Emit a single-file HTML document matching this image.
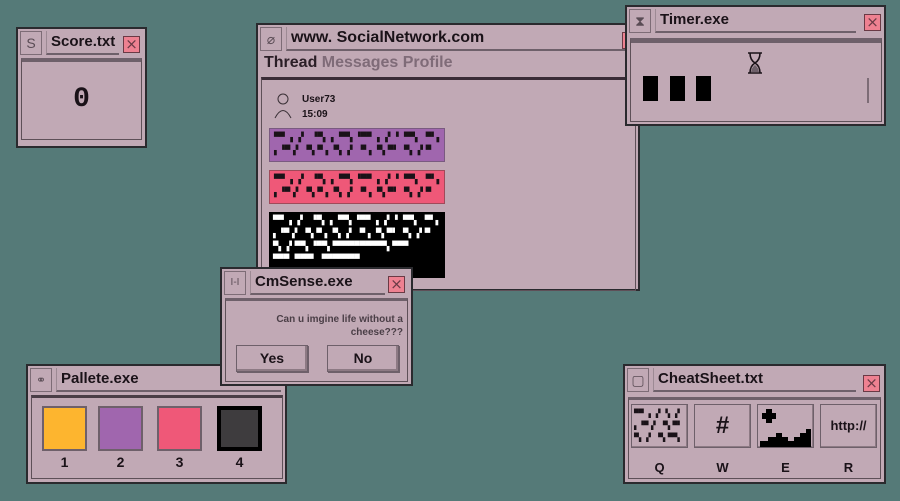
<!DOCTYPE html>
<html><head><meta charset="utf-8"><style>
*{box-sizing:border-box;margin:0;padding:0}
body{width:900px;height:501px;background:#557a78;position:relative;overflow:hidden;font-family:"Liberation Sans","DejaVu Sans",sans-serif;color:#1a1218}
.w{position:absolute;background:#c1a9b5;border:2px solid #2a2a2e}
.tb{position:absolute;left:2px;right:2px;top:2px;height:24px}
.ic{position:absolute;left:0;top:0;width:22px;height:24px;border:1px solid #7d6c76;color:#5a4c55;font-size:14px;text-align:center;line-height:22px}
.tt{position:absolute;left:26px;top:0;height:24px;right:2px;border-bottom:2px solid #6e606a;font-weight:bold;font-size:15px;line-height:22px;padding-left:4px;border-left:1px solid #9d8a94}
.cl{position:absolute;width:17px;height:17px;background:#ee8191;border:1px solid #6a3a45;color:#6a3a45;font-size:15px;line-height:14px;text-align:center;font-family:"DejaVu Sans",sans-serif}
.in{position:absolute;border:1px solid #5e5058;border-top:4px solid #6e606a}
.g{font-family:"DejaVu Sans Mono",monospace;font-size:9px;letter-spacing:0px;line-height:13px;white-space:nowrap;overflow:hidden}
.btn{position:absolute;border:1px solid #6e606a;box-shadow:inset -2px -2px #8d7a84, 1px 1px #6e606a;font-weight:bold;font-size:14px;text-align:center}
.sw{position:absolute;width:45px;height:45px;border:2px solid #6e606a;top:40px}
.num{position:absolute;top:88px;font-size:14px;font-weight:bold;width:45px;text-align:center}
.cb{position:absolute;top:38px;width:57px;height:44px;border:1px solid #6e606a;box-shadow:inset -1px -1px #8d7a84}
.lt{position:absolute;top:94px;width:57px;text-align:center;font-weight:bold;font-size:13px}
</style></head><body>

<!-- Score -->
<div class="w" style="left:16px;top:27px;width:131px;height:121px">
 <div class="tb"><div class="ic">S</div><div class="tt" style="right:24px">Score.txt</div><div class="cl" style="left:103px;top:5px">×</div></div>
 <div class="in" style="left:3px;top:29px;width:121px;height:82px"><div style="text-align:center;font-size:28px;font-weight:bold;margin-top:22px;font-family:'Liberation Mono',monospace">0</div></div>
</div>

<!-- Social -->
<div class="w" style="left:256px;top:23px;width:384px;height:268px">
 <div class="tb"><div class="ic">⌀</div><div class="tt" style="font-size:16px">www. SocialNetwork.com</div><div class="cl" style="left:362px;top:5px">×</div></div>
 <div style="position:absolute;left:6px;top:29px;font-size:16px;font-weight:bold;color:#2a1e26">Thread <span style="color:#7f6b78">Messages Profile</span></div>
 <div class="in" style="left:3px;top:52px;width:375px;height:214px;border-top:3px solid #3a2c36">
  <svg style="position:absolute;left:12px;top:13px" width="20" height="26"><circle cx="9" cy="6" r="5" fill="none" stroke="#3a3036"/><path d="M1 25 Q9 10 17 25" fill="none" stroke="#3a3036"/></svg>
  <div style="position:absolute;left:40px;top:12px;font-size:10px;line-height:15px;font-weight:bold">User73<br>15:09</div>
  <div class="g" style="position:absolute;left:7px;top:48px;width:176px;height:34px;background:#a066ae;border:1px solid #7a5a80;padding:3px 4px;font-weight:bold">▀▀ ▖▗▘ ▝▀▖▗ ▀▀▖▝▀▀ ▖▗▘▝ ▀▀▖ ▀▘▖<br>▖▝▀▗▘ ▀▖▀▗ ▀▖▗▘ ▀▗ ▀▖▀▘ ▀▖▗▘▀</div>
  <div class="g" style="position:absolute;left:7px;top:90px;width:176px;height:34px;background:#ef5878;border:1px solid #a04a5a;padding:3px 4px;font-weight:bold">▀▀ ▖▗▘ ▝▀▖▗ ▀▀▖▝▀▀ ▖▗▘▝ ▀▀▖ ▀▘▖<br>▖▝▀▗▘ ▀▖▀▗ ▀▖▗▘ ▀▗ ▀▖▀▘ ▀▖▗▘▀</div>
  <div class="g" style="position:absolute;left:7px;top:132px;width:176px;height:66px;background:#000;color:#fff;padding:3px 4px;font-weight:bold">▀▀ ▖▗▘ ▝▀▖▗ ▀▀▖▝▀▀ ▖▗▘▝ ▀▀▖ ▀▘▖<br>▖▝▀▗▘ ▀▖▀▗ ▀▖▗▘ ▀▗ ▀▖▀▘ ▀▖▗▘▀<br>▀▖▗▘▀▀▖▝▀▀▖▀▀▀▀▀▀▀▀▀▀▖▀▀▀<br>▀▀▀ ▀▀▀▘      ▀▀▀▀▀▀▀</div>
 </div>
</div>

<!-- Timer -->
<div class="w" style="left:625px;top:5px;width:261px;height:121px">
 <div class="tb"><div class="ic">⧗</div><div class="tt" style="right:26px">Timer.exe</div><div class="cl" style="left:235px;top:5px">×</div></div>
 <div class="in" style="left:3px;top:31px;width:252px;height:84px;border-top:5px solid #6e606a">
  <svg style="position:absolute;left:116px;top:9px" width="16" height="22"><path d="M1 1h14M1 21h14M3 1q0 7 5 10q5-3 5-10M3 21q0-7 5-10q5 3 5 10z" fill="none" stroke="#1a1218" stroke-width="1.6"/><path d="M4 20q1-5 4-7q3 2 4 7z" fill="#6e606a"/></svg>
  <div style="position:absolute;left:12px;top:33px;width:15px;height:25px;background:#000"></div>
  <div style="position:absolute;left:39px;top:33px;width:15px;height:25px;background:#000"></div>
  <div style="position:absolute;left:65px;top:33px;width:15px;height:25px;background:#000"></div>
  <div style="position:absolute;left:236px;top:35px;width:2px;height:25px;background:#7d6c76"></div>
 </div>
</div>

<!-- Pallete -->
<div class="w" style="left:26px;top:364px;width:261px;height:120px">
 <div class="tb"><div class="ic" style="font-size:12px">⚭</div><div class="tt">Pallete.exe</div></div>
 <div class="in" style="left:3px;top:29px;width:252px;height:84px;border-top:3px solid #4a3e46">
 </div>
 <div class="sw" style="left:14px;background:#fdb52f"></div>
 <div class="sw" style="left:70px;background:#a066ae"></div>
 <div class="sw" style="left:129px;background:#ef5878"></div>
 <div class="sw" style="left:189px;background:#3e3c3e;border:4px solid #000"></div>
 <div class="num" style="left:14px">1</div><div class="num" style="left:70px">2</div><div class="num" style="left:129px">3</div><div class="num" style="left:189px">4</div>
</div>

<!-- CmSense -->
<div class="w" style="left:220px;top:267px;width:193px;height:119px">
 <div class="tb"><div class="ic" style="font-size:10px">I-I</div><div class="tt" style="right:24px">CmSense.exe</div><div class="cl" style="left:164px;top:5px">×</div></div>
 <div class="in" style="left:3px;top:29px;width:183px;height:84px;border-top:3px solid #6e606a">
  <div style="position:absolute;right:4px;top:12px;font-size:10px;line-height:13px;text-align:right;font-weight:bold;color:#4a3e46">Can u imgine life without a<br>cheese???</div>
 </div>
 <div class="btn" style="left:14px;top:76px;width:72px;height:27px;line-height:24px">Yes</div>
 <div class="btn" style="left:105px;top:76px;width:72px;height:27px;line-height:24px">No</div>
</div>

<!-- CheatSheet -->
<div class="w" style="left:623px;top:364px;width:263px;height:120px">
 <div class="tb"><div class="ic">▢</div><div class="tt" style="right:26px">CheatSheet.txt</div><div class="cl" style="left:236px;top:7px">×</div></div>
 <div class="in" style="left:3px;top:31px;width:253px;height:82px;border-top:3px solid #6e606a"></div>
 <div class="cb g" style="left:6px;padding:3px 2px;line-height:12px;font-weight:bold;font-size:8px">▀▀ ▖▗▘▝▖▗▘<br>▖▝▀▗▘ ▀▖▀▘<br>▀▖▗▘ ▀▖▀▀▖</div>
 <div class="cb" style="left:69px;text-align:center;font-size:24px;line-height:42px;font-weight:bold">#</div>
 <div class="cb" style="left:132px;overflow:hidden"><svg width="55" height="42"><path d="M8 4h6v4h4v6h-4v4h-6v-4h-4v-6h4z"/><path d="M2 42V36h8v-4h8v-4h6v4h6v4h6v-4h6v-4h6v-4h5v18z"/></svg></div>
 <div class="cb" style="left:195px;text-align:center;font-size:13px;line-height:42px;font-weight:bold">http://</div>
 <div class="lt" style="left:6px">Q</div><div class="lt" style="left:69px">W</div><div class="lt" style="left:132px">E</div><div class="lt" style="left:195px">R</div>
</div>

</body></html>
